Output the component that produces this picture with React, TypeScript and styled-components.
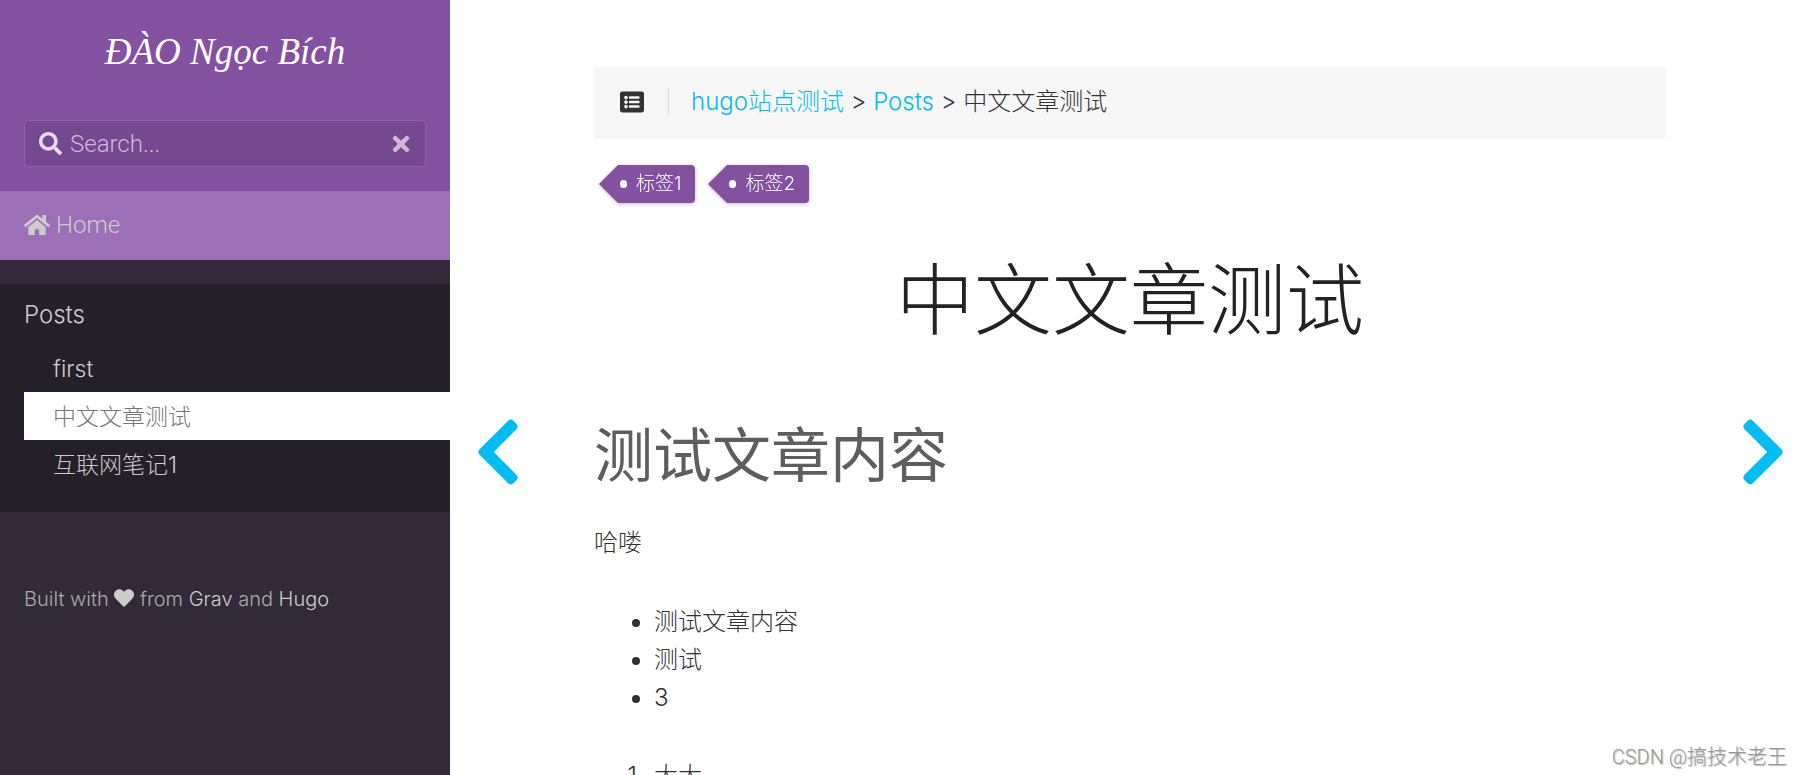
import React from "react";
import styled, { createGlobalStyle, css } from "styled-components";
import {
  FaChevronLeft,
  FaChevronRight,
  FaHeart,
  FaHome,
  FaListAlt,
  FaSearch,
  FaTimes,
} from "react-icons/fa";

const GlobalStyle = createGlobalStyle`
  *, *::before, *::after { box-sizing: border-box; }
  body {
    margin: 0;
    background: #fff;
    color: #323232;
    font-family: Inter, "Noto Sans CJK SC", sans-serif;
    font-size: 24px;
    font-weight: 300;
    line-height: 38px;
  }
  a { color: #00bdf3; text-decoration: none; }
`;

const Page = styled.div`
  display: flex;
  height: 100vh;
  overflow: hidden;
`;

const Sidebar = styled.aside`
  flex: 0 0 450px;
  background: #322a38;
  color: #ccc;
`;

const Header = styled.header`
  display: flex;
  flex-direction: column;
  gap: 24px;
  padding: 16px 24px 24px;
  background: #8451a1;
`;

const Logo = styled.a`
  height: 80px;
  font-family: "Liberation Serif", serif;
  font-size: 37px;
  font-style: italic;
  font-weight: 400;
  line-height: 72px;
  text-align: center;
  && { color: #fff; }
`;

const SearchBox = styled.form`
  display: flex;
  align-items: center;
  gap: 8px;
  height: 47px;
  padding: 0 12px 0 14px;
  border: 1px solid #915eae;
  border-radius: 4px;
  background: #764890;
  color: #e6dbec;
  font-family: Roboto, sans-serif;
`;

const SearchLabel = styled.label`
  display: flex;
  font-size: 23px;
`;

const SearchInput = styled.input`
  flex: 1;
  min-width: 0;
  padding: 0;
  border: 0;
  outline: 0;
  background: transparent;
  color: #fff;
  font: inherit;
  &::placeholder { color: #cdb9d8; opacity: 1; }
`;

const ClearButton = styled.button`
  display: flex;
  padding: 0;
  border: 0;
  background: none;
  color: #cdb9d8;
  font-size: 24px;
`;

const HomeLink = styled.a`
  display: flex;
  align-items: center;
  gap: 6px;
  height: 69px;
  padding: 0 24px 2px;
  background: #9d6fb6;
  font-family: Roboto, sans-serif;
  && { color: #ccc; }
`;

const Menu = styled.nav`
  margin-top: 24px;
  padding: 12px 0 24px 24px;
  background: #251f29;
`;

const MenuTitle = styled.a`
  display: block;
  height: 48px;
  && { color: #ccc; }
`;

const MenuList = styled.ul`
  margin: 0;
  padding: 0;
  list-style: none;
`;

const MenuLink = styled.a<{ $active?: boolean }>`
  display: block;
  height: 48px;
  padding-left: 29px;
  font-size: 23px;
  line-height: 50px;
  && { color: #ccc; }
  ${(p) => p.$active && css`
    background: #fff;
    && { color: #777; }
  `}
`;

const Credit = styled.footer`
  padding: 68px 24px;
  color: #aaa;
  font-size: 20px;
  a { color: #ccc; }
  svg { color: #ccc; vertical-align: -2px; }
`;

const Body = styled.div`
  display: grid;
  flex: 1;
  grid-template-columns: 144px minmax(0, 1fr) 137px;
  min-width: 0;
`;

const PageTurn = styled.a<{ $side: "left" | "right" }>`
  display: flex;
  justify-content: ${(p) => (p.$side === "left" ? "flex-start" : "flex-end")};
  padding: 414px 16px 0 24px;
  font-size: 76px;
  svg { width: 48px; }
`;

const Article = styled.main`
  padding-top: 67px;
`;

const TopBar = styled.div`
  display: flex;
  align-items: center;
  height: 72px;
  padding: 0 24px 2px;
  border-radius: 2px;
  background: #f6f6f6;
`;

const TocButton = styled.button`
  display: flex;
  padding: 2px 24px 2px 2px;
  border: 0;
  border-right: 1px solid #ddd;
  background: none;
  color: #323232;
  font-size: 24px;
`;

const Crumbs = styled.nav`
  padding-left: 22px;
`;

const Tags = styled.div`
  display: flex;
  gap: 13px;
  padding: 26px 5px 0;
`;

const Tag = styled.a`
  display: flex;
  align-items: center;
  height: 38px;
  font-size: 19px;
  filter: drop-shadow(0 1px 2px rgba(0, 0, 0, 0.25));
  && { color: #fff; }
  &::before {
    content: "";
    border: 19px solid transparent;
    border-left: 0;
    border-right-color: #8451a1;
  }
`;

const TagBody = styled.span`
  display: flex;
  align-items: center;
  gap: 9px;
  height: 100%;
  padding: 0 14px 0 2px;
  border-radius: 0 4px 4px 0;
  background: #8451a1;
  &::before {
    content: "";
    width: 7px;
    height: 8px;
    border-radius: 4px;
    background: #fff;
  }
`;

const Title = styled.h1`
  margin: 50px 0 0;
  color: #222;
  font-size: 78px;
  font-weight: 300;
  line-height: 96px;
  text-align: center;
`;

const Heading = styled.h2`
  margin: 67px 0 0;
  color: #5e5e5e;
  font-size: 59px;
  font-weight: 400;
  line-height: 80px;
`;

const Paragraph = styled.p`
  margin: 28px 0 41px;
`;

const listStyle = css`
  margin: 0 0 40px;
  padding-left: 60px;
`;
const Bullets = styled.ul`${listStyle}`;
const Numbers = styled.ol`${listStyle}`;

const Watermark = styled.div`
  position: absolute;
  right: 16px;
  bottom: 4px;
  color: #999;
  font-family: Roboto, "Noto Sans CJK SC", sans-serif;
  font-size: 20px;
  line-height: 28px;
  text-shadow: 1px 1px 1px #bbb;
`;

const posts = [
  { name: "first" },
  { name: "中文文章测试", active: true },
  { name: "互联网笔记1" },
];

export default function App() {
  return (
    <Page>
      <GlobalStyle />
      <Sidebar>
        <Header>
          <Logo href="#">ĐÀO Ngọc Bích</Logo>
          <SearchBox onSubmit={(e) => e.preventDefault()}>
            <SearchLabel htmlFor="search" aria-label="Search"><FaSearch /></SearchLabel>
            <SearchInput id="search" placeholder="Search..." />
            <ClearButton type="reset" aria-label="Clear"><FaTimes /></ClearButton>
          </SearchBox>
        </Header>
        <HomeLink href="#"><FaHome size={26} />Home</HomeLink>
        <Menu>
          <MenuTitle href="#">Posts</MenuTitle>
          <MenuList>
            {posts.map((p) => (
              <li key={p.name}><MenuLink href="#" $active={p.active}>{p.name}</MenuLink></li>
            ))}
          </MenuList>
        </Menu>
        <Credit>
          Built with <FaHeart /> from <a href="#">Grav</a> and <a href="#">Hugo</a>
        </Credit>
      </Sidebar>
      <Body>
        <PageTurn href="#" $side="left" aria-label="Previous"><FaChevronLeft /></PageTurn>
        <Article>
          <TopBar>
            <TocButton aria-label="Table of contents"><FaListAlt /></TocButton>
            <Crumbs>
              <a href="#">hugo站点测试</a> &gt; <a href="#">Posts</a> &gt; 中文文章测试
            </Crumbs>
          </TopBar>
          <Tags>
            <Tag href="#"><TagBody>标签1</TagBody></Tag>
            <Tag href="#"><TagBody>标签2</TagBody></Tag>
          </Tags>
          <Title>中文文章测试</Title>
          <Heading>测试文章内容</Heading>
          <Paragraph>哈喽</Paragraph>
          <Bullets>
            <li>测试文章内容</li>
            <li>测试</li>
            <li>3</li>
          </Bullets>
          <Numbers>
            <li>大大</li>
          </Numbers>
        </Article>
        <PageTurn href="#" $side="right" aria-label="Next"><FaChevronRight /></PageTurn>
      </Body>
      <Watermark>CSDN @搞技术老王</Watermark>
    </Page>
  );
}
